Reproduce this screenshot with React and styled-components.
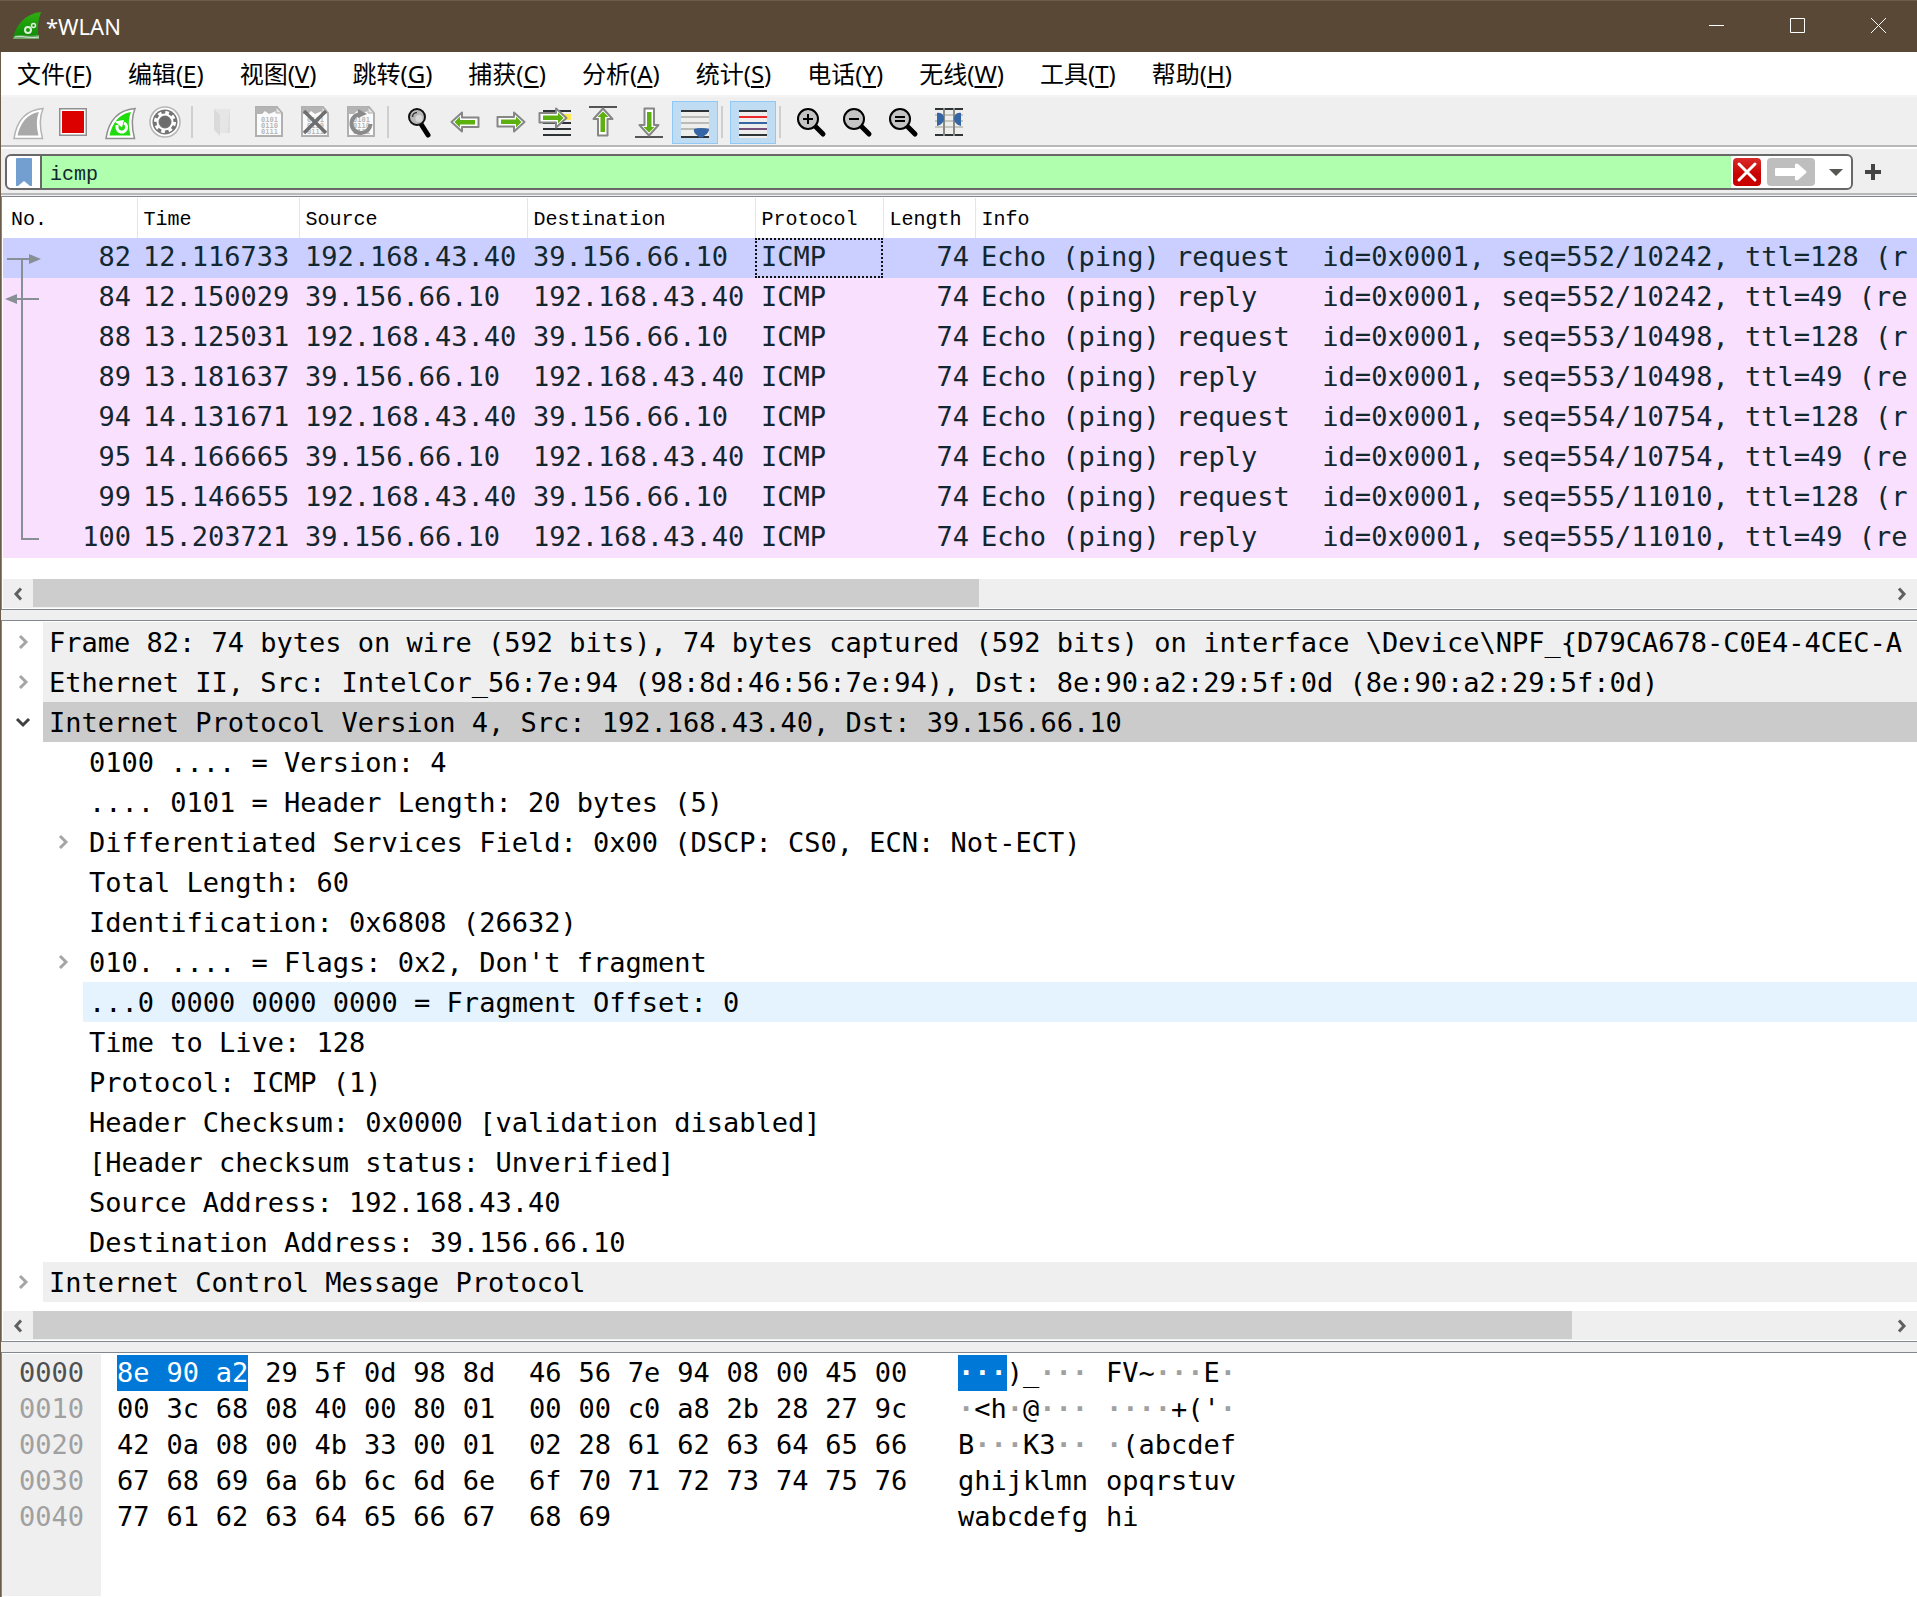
import React from "react";
import styled, { createGlobalStyle, css } from "styled-components";

const MONO = '"DejaVu Sans Mono", monospace';
const UI = '"Noto Sans", "Noto Sans CJK SC", sans-serif';
const HEADER = '"Liberation Mono", monospace';
const EDGE = "#828790";
const FACE = "#efefef";

const GlobalStyle = createGlobalStyle`
  *, *::before, *::after { box-sizing: border-box; }
  body { margin: 0; background: #fff; overflow: hidden; }
  button { border: 0; padding: 0; margin: 0; background: none; font: inherit; color: inherit; }
  svg { display: block; flex: none; overflow: visible; }
`;

const Window = styled.div`
  display: flex;
  flex-direction: column;
  min-height: 100vh;
  background: ${FACE};
  font-family: ${UI};
  color: #000;
`;

/* Title bar */

const TitleBar = styled.header`
  display: flex;
  align-items: center;
  height: 52px;
  padding: 0 0 2px 13px;
  border-top: 1px solid #6c5c4c;
  background: #594836;
  color: #fff;
`;

const Title = styled.h1`
  flex: 1;
  margin: 0;
  padding-left: 5px;
  font-size: 22px;
  font-weight: 400;
  line-height: 28px;
`;

const CaptionButton = styled.button`
  display: flex;
  align-items: center;
  justify-content: center;
  width: 81px;
  height: 49px;
  padding-left: 3px;
`;

const Client = styled.div`
  flex: 1;
  display: flex;
  flex-direction: column;
  min-width: 0;
  border-left: 1px solid #6c5c4c;
`;

/* Menu */

const MenuBar = styled.nav`
  display: flex;
  height: 45px;
  gap: 36px;
  padding: 0 16px;
  background: #fff;
  border-bottom: 2px solid #f4f4f4;
`;

const MenuItem = styled.button`
  font-size: 24px;
  line-height: 42px;
  white-space: nowrap;
`;

const Mnemonic = styled.span`
  text-decoration: underline;
  text-decoration-thickness: 2px;
  text-underline-offset: 3px;
`;

/* Toolbar */

const ToolBar = styled.div`
  display: flex;
  align-items: center;
  height: 50px;
  padding: 2px 0 0 3px;
  background: ${FACE};
  border-bottom: 2px solid #b8b8b8;
`;

const ToolButton = styled.button`
  display: flex;
  align-items: center;
  justify-content: center;
  width: 46px;
  height: 43px;
  ${(p) => p.$active && css`
    background: #c0dcf3;
    border: 1px solid #90c8f6;
  `}
`;

const ToolDivider = styled.span`
  width: 2px;
  height: 32px;
  margin: 0 7px 0 3px;
  background: #cfcfcf;
`;

/* Display filter */

const FilterBar = styled.form`
  display: flex;
  align-items: center;
  height: 48px;
  margin: 0;
  padding: 2px 0 0 4px;
  border-top: 2px solid #fff;
  border-bottom: 2px solid #b8b8b8;
`;

const FilterBox = styled.div`
  flex: 1;
  display: flex;
  align-items: center;
  height: 36px;
  border: 2px solid #686868;
  border-radius: 6px;
  background: #fff;
  overflow: hidden;
`;

const BookmarkButton = styled.button`
  display: flex;
  align-items: center;
  justify-content: center;
  width: 35px;
  height: 32px;
  border-right: 2px solid #686868;
`;

const FilterInput = styled.input`
  flex: 1;
  min-width: 0;
  height: 32px;
  padding: 4px 8px 0;
  border: 0;
  outline: 0;
  background: #afffaf;
  color: #12272e;
  font-family: ${HEADER};
  font-size: 20px;
`;

const FilterActions = styled.div`
  display: flex;
  align-items: center;
  gap: 6px;
  padding-left: 2px;
`;

const ClearButton = styled.button`
  display: flex;
  align-items: center;
  justify-content: center;
  width: 28px;
  height: 28px;
  border-radius: 4px;
  background: linear-gradient(#d92b2b, #c80000 60%);
`;

const ApplyButton = styled.button`
  display: flex;
  align-items: center;
  justify-content: center;
  width: 48px;
  height: 28px;
  border-radius: 4px;
  background: #bebebe;
`;

const HistoryButton = styled.button`
  display: flex;
  align-items: center;
  justify-content: center;
  width: 30px;
  height: 28px;
`;

const AddFilterButton = styled.button`
  display: flex;
  align-items: center;
  justify-content: center;
  width: 40px;
  height: 36px;
  margin-right: 24px;
`;

/* Panes */

const Panes = styled.main`
  flex: 1;
  display: flex;
  flex-direction: column;
  gap: 10px;
  min-width: 0;
  padding-top: 1px;
`;

const Pane = styled.section`
  display: flex;
  flex-direction: column;
  min-width: 0;
  padding: 1px 0 1px 1px;
  border: solid ${EDGE};
  border-width: 1px 0 1px 1px;
  background: #fff;
  overflow: hidden;
  ${(p) => p.$grow && css`
    flex: 1;
    padding-left: 0;
    border-bottom: 0;
  `}
`;

const ScrollBar = styled.div`
  display: flex;
  height: 29px;
  background: ${FACE};
`;

const ScrollArrow = styled.button`
  display: flex;
  align-items: center;
  justify-content: center;
  width: 30px;
`;

const ScrollTrack = styled.div`
  flex: 1;
`;

const ScrollThumb = styled.div`
  width: ${(p) => p.$size}%;
  height: 28px;
  background: #cdcdcd;
`;

/* Packet list */

const PacketArea = styled.div`
  position: relative;
  padding-bottom: 21px;
`;

const PacketTable = styled.table`
  width: 100%;
  table-layout: fixed;
  border-collapse: collapse;
`;

const Col = styled.col`
  width: ${(p) => (p.$width ? `${p.$width}px` : "auto")};
`;

const HeadCell = styled.th`
  height: 40px;
  padding: 4px 6px 0;
  border-right: 1px solid #e5e5e5;
  font-family: ${HEADER};
  font-size: 20px;
  font-weight: 400;
  line-height: 36px;
  text-align: left;
  white-space: nowrap;
  &:first-child { padding-left: 8px; }
  &:last-child { border-right: 0; }
`;

const PacketRow = styled.tr`
  background: ${(p) => (p.$selected ? "#cacfff" : "#fae0ff")};
`;

const PacketCell = styled.td`
  height: 40px;
  padding: 0 6px;
  color: #12272e;
  font-family: ${MONO};
  font-size: 27px;
  line-height: 38px;
  text-align: ${(p) => (p.$end ? "right" : "left")};
  vertical-align: top;
  white-space: pre;
  overflow: hidden;
  ${(p) => p.$focused && css`
    outline: 2px dotted #111;
    outline-offset: -2px;
  `}
`;

const RelationLines = styled.svg`
  position: absolute;
  left: 0;
  top: 40px;
`;

/* Packet details */

const Tree = styled.ul`
  margin: 0;
  padding: 0 0 9px;
  list-style: none;
`;

const Branch = styled.ul`
  margin: 0;
  padding: 0 0 0 40px;
  list-style: none;
`;

const TreeRow = styled.div`
  display: flex;
  height: 40px;
`;

const Toggle = styled.button`
  display: flex;
  flex: none;
  align-items: center;
  justify-content: center;
  width: 40px;
`;

const ToggleSpace = styled.span`
  flex: none;
  width: 40px;
`;

const toneColor = { header: FACE, current: "#cbcbcb", hover: "#e5f3ff" };

const TreeText = styled.span`
  flex: 1;
  min-width: 0;
  padding-left: 6px;
  background: ${(p) => toneColor[p.$tone] || "transparent"};
  font-family: ${MONO};
  font-size: 27px;
  line-height: 42px;
  white-space: pre;
  overflow: hidden;
`;

/* Packet bytes */

const HexView = styled.div`
  flex: 1;
  display: flex;
  font-family: ${MONO};
  font-size: 27px;
  line-height: 36px;
  white-space: pre;
`;

const Offsets = styled.div`
  width: 99px;
  padding: 1px 0 0 17px;
  background: ${FACE};
`;

const Offset = styled.div`
  color: ${(p) => (p.$current ? "#505050" : "#a0a0a0")};
`;

const HexRows = styled.div`
  padding: 1px 34px 0 16px;
`;

const AsciiRows = styled.div`
  padding-top: 1px;
`;

const HexRow = styled.div`
  display: flex;
  gap: ${(p) => p.$gap}px;
`;

const ByteGroup = styled.div`
  display: grid;
  grid-template-columns: repeat(8, 1fr);
  width: 395px;
`;

const ByteCell = styled.span`
  display: flex;
`;

const Byte = styled.span`
  flex: ${(p) => (p.$joined ? 1 : "none")};
  ${(p) => p.$marked && css`
    background: #0078d7;
    color: #fff;
  `}
`;

const CharGroup = styled.div`
  width: 132px;
  height: 36px;
`;

const Char = styled.span`
  ${(p) => p.$dot && css`
    color: #a0a0a0;
    font-weight: 700;
  `}
  ${(p) => p.$marked && css`
    display: inline-block;
    background: #0078d7;
    color: #fff;
    font-weight: 700;
  `}
`;

/* Icons */

const Icon = ({ size = 32, children, ...rest }) => (
  <svg width={size} height={size} viewBox={`0 0 ${size} ${size}`} fill="none" aria-hidden="true" {...rest}>
    {children}
  </svg>
);

const LogoIcon = () => (
  <Icon size={28}>
    <defs>
      <linearGradient id="logoFin" x1="0" y1="0" x2="0" y2="1">
        <stop offset="0" stopColor="#2fae12" />
        <stop offset="1" stopColor="#0b8a06" />
      </linearGradient>
    </defs>
    <path d="M0 27C3 12 12 2 28 0C25 9 24 17 26 27Z" fill="url(#logoFin)" />
    <path d="M1 24C8 22 14 25 26 23V27H0Z" fill="#6fa96a" />
    <path d="M2 25C10 23 15 27 26 25" stroke="#cfe5cb" strokeWidth="1" />
    <circle cx="15" cy="18" r="3" stroke="#dff0dc" strokeWidth="2" />
    <circle cx="20.500" cy="13.500" r="2" stroke="#dff0dc" strokeWidth="1.500" />
  </Icon>
);

const FinIcon = ({ fill, edge, restart }) => (
  <Icon>
    <path d="M3 32.500C5.500 16 14 4 32 2.500C28 12 28.500 21 31.500 32.500Z" fill="#fff" stroke={edge} strokeWidth="1.500" />
    <path d="M6.500 29.500C9.500 16.500 16 8 28 6C25 13 25.500 21 27.500 29.500Z" fill={fill} />
    {restart && (
      <>
        <path d="M14 19V21A4.800 4.800 0 1 0 21 17" stroke="#fff" strokeWidth="3" />
        <path d="M11.500 15.500L21 14L19 21.500Z" fill="#fff" />
      </>
    )}
  </Icon>
);

const StopIcon = () => (
  <Icon>
    <rect x="2.750" y="2.750" width="26.500" height="26.500" fill="#fff" stroke="#8f8f8f" strokeWidth="1.500" />
    <rect x="5" y="5" width="22" height="22" fill="#dc0000" />
  </Icon>
);

const OptionsIcon = () => (
  <Icon>
    <circle cx="16" cy="16" r="15" fill="#fff" stroke="#b5b5b5" strokeWidth="1.500" />
    <circle cx="16" cy="16" r="12.500" fill="#747474" />
    <circle cx="16" cy="16" r="7.500" stroke="#fff" strokeWidth="2" />
    <circle cx="16" cy="16" r="9.500" stroke="#fff" strokeWidth="3" strokeDasharray="3.700 3.760" />
    <circle cx="16" cy="16" r="5" fill="#6c6c6c" />
  </Icon>
);

const OpenIcon = () => (
  <Icon>
    <path d="M7 3H23V27H13Z" fill="#e6e6e6" />
    <path d="M7 3L13 9V30L7 24Z" fill="#dadada" />
    <path d="M21 20C21 14 22 10 23 3V27H20Z" fill="#dedede" />
  </Icon>
);

const BinaryText = styled.text`
  font-family: "DejaVu Sans Mono", monospace;
  font-size: 7px;
  font-weight: 700;
  fill: #b9b9b9;
`;

const DocIcon = ({ mark }) => (
  <Icon>
    <path d="M3 1H24L29 7V30H3Z" fill="#fbfbfb" stroke="#b0b0b0" strokeWidth="2" />
    <path d="M3 1H23V5L16 8L12 5L9 8H3Z" fill="#b4b4b4" />
    <path d="M23 1V7H29Z" fill="#e4e4e4" stroke="#b0b0b0" />
    <BinaryText x="8" y="16">0101</BinaryText>
    <BinaryText x="8" y="22">0110</BinaryText>
    <BinaryText x="8" y="28">0111</BinaryText>
    {mark === "close" && <path d="M5 5L27 27M27 5L5 27" stroke="#6e6e6e" strokeWidth="3.500" />}
    {mark === "reload" && (
      <>
        <path d="M17 8A9.500 9.500 0 1 0 25.500 18" stroke="#8a8a8a" strokeWidth="4" />
        <path d="M13 3L22 8L13 12Z" fill="#8a8a8a" />
      </>
    )}
  </Icon>
);

const FindIcon = () => (
  <Icon>
    <path d="M18 18L25 29" stroke="#000" strokeWidth="5" strokeLinecap="round" />
    <circle cx="14" cy="11" r="8" fill="#b9b9b9" stroke="#111" strokeWidth="2" />
    <path d="M9.500 11A4.500 4.500 0 0 1 14 6.500" stroke="#333" strokeWidth="1.500" />
    <circle cx="16" cy="12.500" r="3.500" fill="#d6d6d6" />
  </Icon>
);

const ARROW = "M2.500 16L13 6.500V11.500H29.500V21H13V25.500Z";
const ARROW_CORE = "M5.500 16L11 10.500V14H26V18.500H11V21.500Z";
const Arrow = ({ turn = 0, x = 0, y = 0 }) => (
  <g transform={`translate(${x} ${y}) rotate(${turn} 16 16)`}>
    <path d={ARROW} fill="#fff" stroke="#868686" strokeWidth="2" strokeLinejoin="round" />
    <path d={ARROW_CORE} fill="#5cb010" />
  </g>
);

const BackIcon = () => <Icon><Arrow /></Icon>;
const ForwardIcon = () => <Icon><Arrow turn={180} /></Icon>;
const GoToIcon = () => (
  <Icon>
    <path d="M2 5H30M2 17H30M2 23H30M2 29H30" stroke="#2e3436" strokeWidth="2" />
    <rect x="20" y="8" width="10" height="6" fill="#fce94f" />
    <Arrow turn={180} x={-4} y={-4} />
  </Icon>
);
const FirstIcon = () => (
  <Icon>
    <path d="M2 1H30" stroke="#555" strokeWidth="2" />
    <Arrow turn={90} />
  </Icon>
);
const LastIcon = () => (
  <Icon>
    <path d="M2 31H30" stroke="#555" strokeWidth="2" />
    <Arrow turn={270} />
  </Icon>
);
const AutoScrollIcon = () => (
  <Icon>
    <rect x="2" y="4" width="28" height="28" fill="#eeeeec" />
    <path d="M2 5H30M2 31H30" stroke="#2e3436" strokeWidth="2" />
    <path d="M2 11H30M2 17H30M2 23H30" stroke="#babdb6" strokeWidth="2" />
    <path d="M15 23Q22 21 30 23C30 28 25 29 24 31.500H20C19 29 14 28 15 23Z" fill="#3465a4" />
  </Icon>
);
const ColorizeIcon = () => (
  <Icon>
    <rect x="2" y="4" width="28" height="28" fill="#eeeeec" />
    <path d="M2 5H30M2 29H30" stroke="#2e3436" strokeWidth="2" />
    <path d="M2 11H30" stroke="#ef2929" strokeWidth="2" />
    <path d="M2 17H30" stroke="#3465a4" strokeWidth="2" />
    <path d="M2 23H30" stroke="#75507b" strokeWidth="2" />
  </Icon>
);
const ZoomIcon = ({ sign }) => (
  <Icon>
    <path d="M20 20L28 28" stroke="#000" strokeWidth="5" strokeLinecap="round" />
    <circle cx="13" cy="13" r="10" fill="#c4c4c4" stroke="#000" strokeWidth="2" />
    <path d={sign} stroke="#000" strokeWidth="2" />
  </Icon>
);
const ResizeIcon = () => (
  <Icon>
    <rect x="2" y="2" width="28" height="28" fill="#eeeeec" />
    <path d="M2 9H30M2 15H30M2 21H30" stroke="#c4c6c0" strokeWidth="2" />
    <path d="M2 3H30M2 29H30" stroke="#2e3436" strokeWidth="2" />
    <path d="M11 2V30M21 2V30" stroke="#888a85" strokeWidth="2" />
    <path d="M4 7C9 6 11 10 11 13C11 16 8 19 4 20Z" fill="#3465a4" />
    <path d="M28 7C23 6 21 10 21 13C21 16 24 19 28 20Z" fill="#3465a4" />
  </Icon>
);

const Chevron = ({ open, color }) => (
  <Icon size={16}>
    <path d={open ? "M2 5L8 11L14 5" : "M5 2L11 8L5 14"} stroke={color} strokeWidth="3" />
  </Icon>
);

const ArrowGlyph = ({ left }) => (
  <Icon size={14}>
    <path d={left ? "M10 1.500L5 7L10 12.500" : "M4 1.500L9 7L4 12.500"} stroke="#606060" strokeWidth="3" />
  </Icon>
);

/* Data */

const menus = [
  ["文件", "F"], ["编辑", "E"], ["视图", "V"], ["跳转", "G"], ["捕获", "C"], ["分析", "A"],
  ["统计", "S"], ["电话", "Y"], ["无线", "W"], ["工具", "T"], ["帮助", "H"],
];

const tools = [
  ["Start capture", <FinIcon fill="#a9a9a9" edge="#b4b4b4" />],
  ["Stop capture", <StopIcon />],
  ["Restart capture", <FinIcon fill="#1fdc0c" edge="#8f8f8f" restart />],
  ["Capture options", <OptionsIcon />],
  null,
  ["Open file", <OpenIcon />],
  ["Save file", <DocIcon />],
  ["Close file", <DocIcon mark="close" />],
  ["Reload file", <DocIcon mark="reload" />],
  null,
  ["Find packet", <FindIcon />],
  ["Previous packet", <BackIcon />],
  ["Next packet", <ForwardIcon />],
  ["Go to packet", <GoToIcon />],
  ["First packet", <FirstIcon />],
  ["Last packet", <LastIcon />],
  ["Auto scroll", <AutoScrollIcon />, true],
  null,
  ["Colorize", <ColorizeIcon />, true],
  null,
  ["Zoom in", <ZoomIcon sign="M8 13H18M13 8V18" />],
  ["Zoom out", <ZoomIcon sign="M8 13H18" />],
  ["Normal size", <ZoomIcon sign="M8 11H18M8 15H18" />],
  ["Resize columns", <ResizeIcon />],
];

const columns = [
  ["No.", 134], ["Time", 162], ["Source", 228], ["Destination", 228],
  ["Protocol", 128], ["Length", 92], ["Info", null],
];

const HOST = "192.168.43.40";
const PEER = "39.156.66.10";
const packets = [
  [82, "12.116733", "552/10242"],
  [84, "12.150029", "552/10242"],
  [88, "13.125031", "553/10498"],
  [89, "13.181637", "553/10498"],
  [94, "14.131671", "554/10754"],
  [95, "14.166665", "554/10754"],
  [99, "15.146655", "555/11010"],
  [100, "15.203721", "555/11010"],
].map(([no, time, seq], i) => {
  const request = i % 2 === 0;
  return {
    no,
    time,
    source: request ? HOST : PEER,
    destination: request ? PEER : HOST,
    info: request
      ? `Echo (ping) request  id=0x0001, seq=${seq}, ttl=128 (r`
      : `Echo (ping) reply    id=0x0001, seq=${seq}, ttl=49 (re`,
  };
});

const details = [
  { text: "Frame 82: 74 bytes on wire (592 bits), 74 bytes captured (592 bits) on interface \\Device\\NPF_{D79CA678-C0E4-4CEC-A", tone: "header", closed: true },
  { text: "Ethernet II, Src: IntelCor_56:7e:94 (98:8d:46:56:7e:94), Dst: 8e:90:a2:29:5f:0d (8e:90:a2:29:5f:0d)", tone: "header", closed: true },
  {
    text: "Internet Protocol Version 4, Src: 192.168.43.40, Dst: 39.156.66.10",
    tone: "current",
    children: [
      { text: "0100 .... = Version: 4" },
      { text: ".... 0101 = Header Length: 20 bytes (5)" },
      { text: "Differentiated Services Field: 0x00 (DSCP: CS0, ECN: Not-ECT)", closed: true },
      { text: "Total Length: 60" },
      { text: "Identification: 0x6808 (26632)" },
      { text: "010. .... = Flags: 0x2, Don't fragment", closed: true },
      { text: "...0 0000 0000 0000 = Fragment Offset: 0", tone: "hover" },
      { text: "Time to Live: 128" },
      { text: "Protocol: ICMP (1)" },
      { text: "Header Checksum: 0x0000 [validation disabled]" },
      { text: "[Header checksum status: Unverified]" },
      { text: "Source Address: 192.168.43.40" },
      { text: "Destination Address: 39.156.66.10" },
    ],
  },
  { text: "Internet Control Message Protocol", tone: "header", closed: true },
];

const hexLines = [
  ["0000", "8e 90 a2 29 5f 0d 98 8d", "46 56 7e 94 08 00 45 00", "···)_···", "FV~···E·"],
  ["0010", "00 3c 68 08 40 00 80 01", "00 00 c0 a8 2b 28 27 9c", "·<h·@···", "····+('·"],
  ["0020", "42 0a 08 00 4b 33 00 01", "02 28 61 62 63 64 65 66", "B···K3··", "·(abcdef"],
  ["0030", "67 68 69 6a 6b 6c 6d 6e", "6f 70 71 72 73 74 75 76", "ghijklmn", "opqrstuv"],
  ["0040", "77 61 62 63 64 65 66 67", "68 69", "wabcdefg", "hi"],
];
const MARKED = 3;

/* Composite parts */

const HorizontalScroll = ({ size }) => (
  <ScrollBar>
    <ScrollArrow type="button" aria-label="Scroll left"><ArrowGlyph left /></ScrollArrow>
    <ScrollTrack><ScrollThumb $size={size} /></ScrollTrack>
    <ScrollArrow type="button" aria-label="Scroll right"><ArrowGlyph /></ScrollArrow>
  </ScrollBar>
);

const TreeNode = ({ node }) => (
  <li>
    <TreeRow>
      {node.closed || node.children ? (
        <Toggle type="button" aria-label={node.closed ? "Expand" : "Collapse"} aria-expanded={!node.closed}>
          <Chevron open={!node.closed} color={node.closed ? "#a6a6a6" : "#404040"} />
        </Toggle>
      ) : (
        <ToggleSpace />
      )}
      <TreeText $tone={node.tone}>{node.text}</TreeText>
    </TreeRow>
    {node.children && (
      <Branch>
        {node.children.map((child) => <TreeNode key={child.text} node={child} />)}
      </Branch>
    )}
  </li>
);

const Bytes = ({ text, marked = 0 }) => (
  <ByteGroup>
    {text.split(" ").map((byte, i) => (
      <ByteCell key={i}>
        <Byte $marked={i < marked} $joined={i < marked - 1}>{byte}</Byte>
      </ByteCell>
    ))}
  </ByteGroup>
);

const Chars = ({ text, marked = 0 }) => (
  <CharGroup>
    {marked > 0 && <Char $marked>{text.slice(0, marked)}</Char>}
    {text.slice(marked).split(/(·+)/).filter(Boolean).map((part, i) => (
      <Char key={i} $dot={part[0] === "·"}>{part}</Char>
    ))}
  </CharGroup>
);

export default function App() {
  return (
    <Window>
      <GlobalStyle />
      <TitleBar>
        <LogoIcon />
        <Title>*WLAN</Title>
        <CaptionButton type="button" aria-label="Minimize">
          <Icon size={15}><path d="M0 7.500H15" stroke="#fff" /></Icon>
        </CaptionButton>
        <CaptionButton type="button" aria-label="Maximize">
          <Icon size={15}><path d="M.5 .5H14.500V14.500H.5Z" stroke="#fff" /></Icon>
        </CaptionButton>
        <CaptionButton type="button" aria-label="Close">
          <Icon size={15}><path d="M0 0L15 15M15 0L0 15" stroke="#fff" /></Icon>
        </CaptionButton>
      </TitleBar>

      <Client>
        <MenuBar>
          {menus.map(([label, key]) => (
            <MenuItem key={key} type="button">{label}(<Mnemonic>{key}</Mnemonic>)</MenuItem>
          ))}
        </MenuBar>

        <ToolBar>
          {tools.map((tool, i) =>
            tool ? (
              <ToolButton key={i} type="button" aria-label={tool[0]} $active={tool[2]}>{tool[1]}</ToolButton>
            ) : (
              <ToolDivider key={i} />
            )
          )}
        </ToolBar>

        <FilterBar onSubmit={(e) => e.preventDefault()}>
          <FilterBox>
            <BookmarkButton type="button" aria-label="Filter bookmarks">
              <svg width="16" height="28" viewBox="0 0 16 28" aria-hidden="true">
                <path d="M0 1Q0 0 1 0H15Q16 0 16 1V28H14L8 23L2 28H0Z" fill="#729fcf" />
              </svg>
            </BookmarkButton>
            <FilterInput aria-label="Display filter" defaultValue="icmp" />
            <FilterActions>
              <ClearButton type="button" aria-label="Clear filter">
                <Icon size={20}><path d="M2 2L18 18M18 2L2 18" stroke="#fff" strokeWidth="3" strokeLinecap="round" /></Icon>
              </ClearButton>
              <ApplyButton type="submit" aria-label="Apply filter">
                <svg width="32" height="18" viewBox="0 0 32 18" aria-hidden="true">
                  <path d="M1 5H20V1.500Q21 0 23 1L31 8Q32 9 31 10L23 17Q21 18 20 16.500V13H1Q0 13 0 12V6Q0 5 1 5Z" fill="#fff" />
                </svg>
              </ApplyButton>
              <HistoryButton type="button" aria-label="Filter history">
                <svg width="14" height="7" viewBox="0 0 14 7" aria-hidden="true">
                  <path d="M0 0H14L7 7Z" fill="#555753" />
                </svg>
              </HistoryButton>
            </FilterActions>
          </FilterBox>
          <AddFilterButton type="button" aria-label="Add filter button">
            <Icon size={16}><path d="M8 0V16M0 8H16" stroke="#444" strokeWidth="4" /></Icon>
          </AddFilterButton>
        </FilterBar>

        <Panes>
          <Pane aria-label="Packet list">
            <PacketArea>
              <PacketTable>
                <colgroup>
                  {columns.map(([name, width]) => <Col key={name} $width={width} />)}
                </colgroup>
                <thead>
                  <tr>{columns.map(([name]) => <HeadCell key={name} scope="col">{name}</HeadCell>)}</tr>
                </thead>
                <tbody>
                  {packets.map((p, i) => (
                    <PacketRow key={p.no} $selected={i === 0}>
                      <PacketCell $end>{p.no}</PacketCell>
                      <PacketCell>{p.time}</PacketCell>
                      <PacketCell>{p.source}</PacketCell>
                      <PacketCell>{p.destination}</PacketCell>
                      <PacketCell $focused={i === 0}>ICMP</PacketCell>
                      <PacketCell $end>74</PacketCell>
                      <PacketCell>{p.info}</PacketCell>
                    </PacketRow>
                  ))}
                </tbody>
              </PacketTable>
              <RelationLines width="40" height="320" viewBox="0 0 40 320" fill="none" aria-hidden="true">
                <path d="M4 21H28M19 21V301H36M12 61H36" stroke="#889096" strokeWidth="2" />
                <path d="M26 16L38 21L26 26ZM14 56L2 61L14 66Z" fill="#889096" />
              </RelationLines>
            </PacketArea>
            <HorizontalScroll size={51} />
          </Pane>

          <Pane aria-label="Packet details">
            <Tree>
              {details.map((node) => <TreeNode key={node.text} node={node} />)}
            </Tree>
            <HorizontalScroll size={83} />
          </Pane>

          <Pane $grow aria-label="Packet bytes">
            <HexView>
              <Offsets>
                {hexLines.map(([offset], i) => <Offset key={offset} $current={i === 0}>{offset}</Offset>)}
              </Offsets>
              <HexRows>
                {hexLines.map(([offset, a, b], i) => (
                  <HexRow key={offset} $gap={17}>
                    <Bytes text={a} marked={i === 0 ? MARKED : 0} />
                    <Bytes text={b} />
                  </HexRow>
                ))}
              </HexRows>
              <AsciiRows>
                {hexLines.map(([offset, , , a, b], i) => (
                  <HexRow key={offset} $gap={16}>
                    <Chars text={a} marked={i === 0 ? MARKED : 0} />
                    <Chars text={b} />
                  </HexRow>
                ))}
              </AsciiRows>
            </HexView>
          </Pane>
        </Panes>
      </Client>
    </Window>
  );
}
